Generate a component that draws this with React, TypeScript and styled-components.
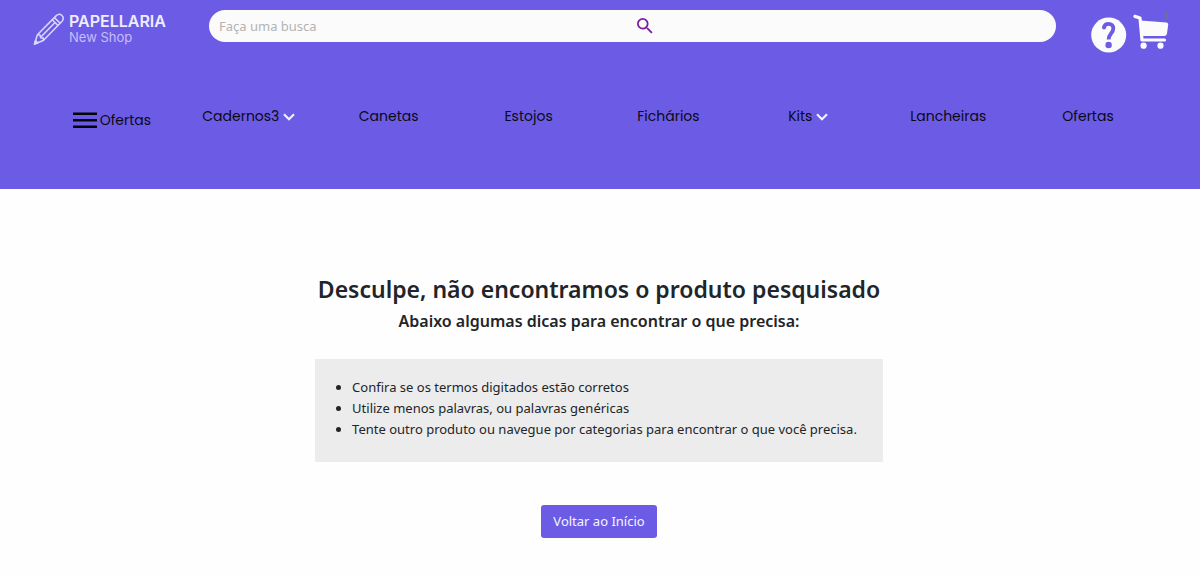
import styled, { createGlobalStyle } from 'styled-components';

const GlobalStyle = createGlobalStyle`
  *, *::before, *::after { box-sizing: border-box; }
  body {
    margin: 0;
    background: #fefefe;
    color: #212529;
    font-family: 'Segoe UI', 'Noto Sans', sans-serif;
    font-size: 13px;
    line-height: 21px;
  }
`;

const Header = styled.header`
  background: #6c5ce5;
  padding: 10px 30px 58px 33px;
`;

const TopBar = styled.div`
  display: flex;
  align-items: flex-start;
`;

const Logo = styled.a`
  display: flex;
  align-items: center;
  gap: 4px;
  width: 176px;
  padding-top: 2px;
  color: #efecff;
  text-decoration: none;
  font-family: Inter, sans-serif;
`;

const LogoText = styled.span`
  display: flex;
  flex-direction: column;
  color: #c6befa;
`;

const LogoName = styled.strong`
  font-size: 16px;
  line-height: 17px;
  font-weight: 600;
  color: #efecff;
`;

const LogoTagline = styled.span`
  font-size: 13px;
  line-height: 15px;
`;

const SearchForm = styled.form`
  flex: 1;
  display: grid;
  grid-template-columns: 1fr 1fr;
  height: 32px;
  border-radius: 16px;
  background: #fbfbfb;
  overflow: hidden;
`;

const SearchInput = styled.input`
  min-width: 0;
  border: 0;
  padding: 0 10px;
  background: transparent;
  color: #212529;
  font: inherit;
  &::placeholder { color: #b3b3b3; opacity: 1; }
`;

const SearchButton = styled.button`
  display: flex;
  align-items: center;
  justify-self: start;
  border: 0;
  padding: 0 4px;
  background: transparent;
  color: #7b1fa2;
  cursor: pointer;
`;

const Actions = styled.div`
  display: flex;
  gap: 6px;
  margin-left: 35px;
`;

const Action = styled.a`
  position: relative;
  display: block;
  height: 43px;
  color: #fbfbfb;
  svg { display: block; }
`;

const HelpAction = styled(Action)`
  padding-top: 7px;
`;

const CartAction = styled(Action)`
  padding-top: 4px;
`;

const CategoryList = styled.ul`
  display: grid;
  grid-template-columns: repeat(8, 1fr);
  align-items: start;
  list-style: none;
  margin: 52px 12px 0 6px;
  padding: 0;
`;

const Category = styled.li`
  display: flex;
  justify-content: center;
  padding-top: 1px;
`;

const MenuCategory = styled(Category)`
  padding: 5px 0 0 6px;
`;

const CategoryLink = styled.a`
  display: flex;
  align-items: center;
  gap: 4px;
  color: #0b0916;
  text-decoration: none;
  font-family: Poppins, Inter, sans-serif;
  font-size: 14px;
  line-height: 21px;
`;

const MenuButton = styled.button`
  display: flex;
  align-items: center;
  gap: 3px;
  border: 0;
  padding: 0;
  background: transparent;
  color: #0b0916;
  font-family: Poppins, Inter, sans-serif;
  font-size: 14px;
  line-height: 21px;
  cursor: pointer;
`;

const Main = styled.main`
  display: flex;
  flex-direction: column;
  align-items: center;
  padding: 84px 18px 38px 16px;
`;

const Title = styled.h1`
  margin: 0;
  font-size: 23px;
  line-height: 32px;
  font-weight: 600;
  text-align: center;
`;

const Subtitle = styled.h2`
  margin: 6px 0 27px;
  font-size: 16px;
  line-height: 21px;
  font-weight: 600;
  text-align: center;
`;

const Tips = styled.ul`
  margin: 0;
  padding: 18px 26px 22px 37px;
  background: #ececec;
`;

const HomeButton = styled.button`
  margin-top: 43px;
  height: 33px;
  border: 0;
  border-radius: 3px;
  padding: 0 12px;
  background: #6c5ce5;
  color: #f6f4ff;
  font: inherit;
  cursor: pointer;
`;

const PencilIcon = () => (
  <svg width="32" height="34" viewBox="0 0 32 34" fill="none" stroke="#ddd7ff" strokeWidth="1.5" strokeLinejoin="round" aria-hidden="true">
    <path d="M1.5 32 4.4 22.8 23.3 3.6q3-2.6 5.6-.1t.2 5.7L10.3 28.5Z" />
    <path d="M4.4 22.8 7 23l.6 2.7 2.7.3v2.5M19.2 7.8l5.8 5.7M21.4 5.6l5.8 5.7M7.4 25.5 22 10.6" />
    <path d="M1.5 32 2.6 28.6 4.8 31Z" fill="#ddd7ff" />
  </svg>
);

const SearchIcon = () => (
  <svg width="16" height="16" viewBox="3 3 18 18" fill="currentColor" aria-hidden="true">
    <path d="M15.5 14h-.79l-.28-.27A6.47 6.47 0 0 0 16 9.5 6.5 6.5 0 1 0 9.5 16c1.61 0 3.09-.59 4.23-1.57l.27.28v.79l5 4.99L20.49 19zm-6 0C7.01 14 5 11.99 5 9.5S7.01 5 9.5 5 14 7.01 14 9.5 11.99 14 9.5 14" />
  </svg>
);

const HelpIcon = () => (
  <svg width="36" height="36" viewBox="0 0 36 36" aria-hidden="true">
    <circle cx="17.7" cy="18" r="17.5" fill="currentColor" />
    <path d="M13 10.6C13.4 8 15.4 6.8 17.6 6.8c3 0 4.7 2 4.7 4.6 0 4.8-4.7 5.6-4.7 11" fill="none" stroke="#6c5ce5" strokeWidth="3.8" />
    <circle cx="13" cy="10.6" r="2" fill="#6c5ce5" />
    <circle cx="17.6" cy="28" r="3.2" fill="#6c5ce5" />
  </svg>
);

const CartIcon = () => (
  <svg width="37" height="36" viewBox="0 0 37 36" aria-hidden="true">
    <path d="M1.9 2.4 7 4 9 26H31.5" fill="none" stroke="currentColor" strokeWidth="3.2" strokeLinecap="round" strokeLinejoin="round" />
    <path d="M7.4 6.5 33.5 8.6q1.9.3 1.7 2L34 19.6q-.4 2.3-2.5 2.4H8.3Z" fill="currentColor" />
    <circle cx="10.6" cy="31.7" r="3.1" fill="currentColor" />
    <circle cx="27.5" cy="31.7" r="3.1" fill="currentColor" />
  </svg>
);

const CartMark = styled.span`
  position: absolute;
  top: 1px;
  right: 2px;
  width: 3px;
  height: 8px;
  border-radius: 2px;
  background: #67728f;
`;

const ChevronIcon = () => (
  <svg width="12" height="8" viewBox="0 0 12 8" fill="none" stroke="#f4f2ff" strokeWidth="2.1" aria-hidden="true">
    <path d="M1 1.2 6 6.2 11 1.2" />
  </svg>
);

const MenuIcon = () => (
  <svg width="24" height="17" viewBox="0 0 24 17" fill="#050409" aria-hidden="true">
    <path d="M0 .5h24V3H0zM0 7h24v2.5H0zM0 13.500h24V16H0z" />
  </svg>
);

const categories = [
  { name: 'Cadernos3', nested: true },
  { name: 'Canetas' },
  { name: 'Estojos' },
  { name: 'Fichários' },
  { name: 'Kits', nested: true },
  { name: 'Lancheiras' },
  { name: 'Ofertas' },
];

const tips = [
  'Confira se os termos digitados estão corretos',
  'Utilize menos palavras, ou palavras genéricas',
  'Tente outro produto ou navegue por categorias para encontrar o que você precisa.',
];

export default function App() {
  return (
    <>
      <GlobalStyle />
      <Header>
        <TopBar>
          <Logo href="#">
            <PencilIcon />
            <LogoText>
              <LogoName>PAPELLARIA</LogoName>
              <LogoTagline>New Shop</LogoTagline>
            </LogoText>
          </Logo>
          <SearchForm role="search">
            <SearchInput type="search" aria-label="Faça uma busca" placeholder="Faça uma busca" />
            <SearchButton type="button" aria-label="Buscar">
              <SearchIcon />
            </SearchButton>
          </SearchForm>
          <Actions>
            <HelpAction href="#" aria-label="Ajuda">
              <HelpIcon />
            </HelpAction>
            <CartAction href="#" aria-label="Carrinho">
              <CartIcon />
              <CartMark />
            </CartAction>
          </Actions>
        </TopBar>
        <nav aria-label="Categorias">
          <CategoryList>
            <MenuCategory>
              <MenuButton type="button">
                <MenuIcon />
                Ofertas
              </MenuButton>
            </MenuCategory>
            {categories.map(({ name, nested }) => (
              <Category key={name}>
                <CategoryLink href="#">
                  {name}
                  {nested && <ChevronIcon />}
                </CategoryLink>
              </Category>
            ))}
          </CategoryList>
        </nav>
      </Header>
      <Main>
        <Title>Desculpe, não encontramos o produto pesquisado</Title>
        <Subtitle>Abaixo algumas dicas para encontrar o que precisa:</Subtitle>
        <Tips>
          {tips.map((tip) => (
            <li key={tip}>{tip}</li>
          ))}
        </Tips>
        <HomeButton type="button">Voltar ao Início</HomeButton>
      </Main>
    </>
  );
}
